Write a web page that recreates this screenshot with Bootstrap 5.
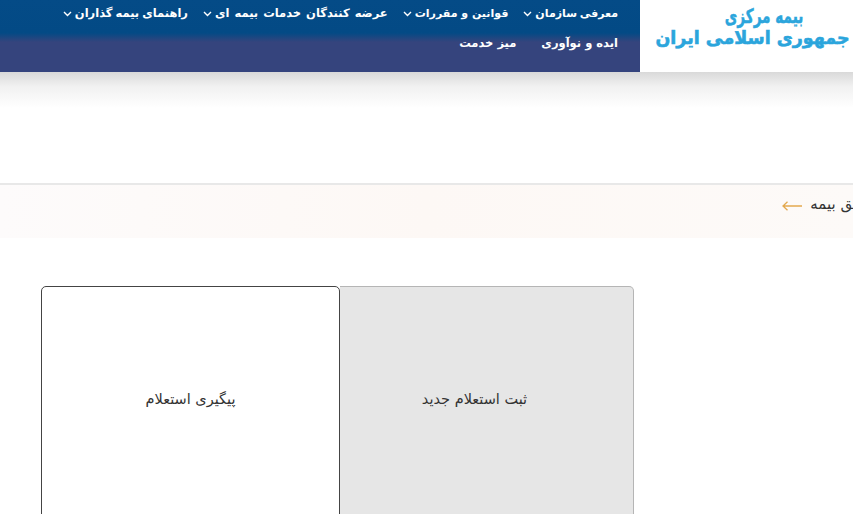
<!DOCTYPE html>
<html lang="fa" dir="rtl">
<head>
<meta charset="utf-8">
<title>استعلام</title>
<link href="https://cdn.jsdelivr.net/npm/bootstrap@5.3.0/dist/css/bootstrap.min.css" rel="stylesheet">
<style>
html,body{height:514px;overflow:hidden;background:#fff;}
body{font-family:"DejaVu Sans","Noto Sans",sans-serif;color:#333;}
.site-head{height:72px;position:relative;}
.site-head::after{content:"";position:absolute;top:72px;left:0;right:0;height:36px;background:linear-gradient(180deg,#d9d9d9,#f1f1f1 40%,#fff);}
.logo-box{width:213px;background:#fff;color:#2ba5dc;font-weight:700;padding-top:6px;padding-left:12px;overflow:hidden;}
.logo-one{font-size:20px;line-height:21px;padding-left:34px;transform:scaleX(.68);-webkit-text-stroke:.5px #2ba5dc;}
.logo-two{font-size:18px;line-height:21px;white-space:nowrap;transform:scaleX(.97);-webkit-text-stroke:.6px #2ba5dc;}
.menu-box{flex:1;background:linear-gradient(180deg,#044b87 0,#034a85 33px,#35447d 42px,#35447d 100%);padding-right:22px;}
.menu-list{margin-top:-1px;}
.menu-list a{color:#fff;font-size:11.5px;font-weight:700;text-decoration:none;display:flex;align-items:center;gap:3px;white-space:nowrap;margin-left:25px;height:30px;}
.menu-list a.has-sub{margin-left:15px;}
.menu-list a.item-org{font-size:11px;word-spacing:-1px;}
.menu-list a.item-law{font-size:11px;}
.menu-list a.item-vendors{word-spacing:1px;}
.menu-list a.item-guide{word-spacing:-1px;}
.crumb-strip{margin-top:111px;height:55px;border-top:2px solid #e8e8e8;background:linear-gradient(90deg,#fdfbfb,#fdf8f5 50%,#fdfaf8);white-space:nowrap;padding-bottom:15px;}
.crumb-text{font-size:15px;color:#333;}
.tab-wrap{margin:48px 219px 0 41px;}
.tab-pane-a,.tab-pane-b{height:260px;padding-top:102px;font-size:14.5px;color:#333;text-align:center;}
.tab-pane-a{background:#e6e6e6;border:1px solid #b5b5b5;border-left:0;border-radius:0 5px 0 0;width:294px;flex:none;padding-right:24px;}
.tab-pane-b{background:#fff;border:1px solid #444;border-radius:5px 5px 0 0;flex:1 1 0;}
</style>
</head>
<body>
<header class="site-head d-flex">
  <a class="logo-box d-block text-center text-decoration-none" href="#">
    <div class="logo-one">بیمه مرکزی</div>
    <div class="logo-two">جمهوری اسلامی ایران</div>
  </a>
  <nav class="menu-box">
    <div class="menu-list d-flex flex-wrap">
      <a class="has-sub item-org" href="#">معرفی سازمان <svg width="9" height="6" viewBox="0 0 9 6"><path d="M1 1l3.500 3.500L8 1" fill="none" stroke="#fff" stroke-width="1.400"/></svg></a>
      <a class="has-sub item-law" href="#">قوانین و مقررات <svg width="9" height="6" viewBox="0 0 9 6"><path d="M1 1l3.500 3.500L8 1" fill="none" stroke="#fff" stroke-width="1.400"/></svg></a>
      <a class="has-sub item-vendors" href="#">عرضه کنندگان خدمات بیمه ای <svg width="9" height="6" viewBox="0 0 9 6"><path d="M1 1l3.500 3.500L8 1" fill="none" stroke="#fff" stroke-width="1.400"/></svg></a>
      <a class="has-sub item-guide" href="#">راهنمای بیمه گذاران <svg width="9" height="6" viewBox="0 0 9 6"><path d="M1 1l3.500 3.500L8 1" fill="none" stroke="#fff" stroke-width="1.400"/></svg></a>
      <a href="#">ایده و نوآوری</a>
      <a href="#">میز خدمت</a>
    </div>
  </nav>
</header>
<div class="crumb-strip d-flex align-items-center">
  <span class="crumb-text">&zwj;ق بیمه</span>
  <svg class="me-2 mt-1" width="20" height="10" viewBox="0 0 20 10"><path d="M20 5H1M5.500 .8L1 5l4.500 4.200" fill="none" stroke="#e3a94f" stroke-width="1.300"/></svg>
</div>
<main class="tab-wrap d-flex">
  <div class="tab-pane-a">ثبت استعلام جدید</div>
  <div class="tab-pane-b">پیگیری استعلام</div>
</main>
<script src="https://cdn.jsdelivr.net/npm/bootstrap@5.3.0/dist/js/bootstrap.bundle.min.js"></script>
</body>
</html>
